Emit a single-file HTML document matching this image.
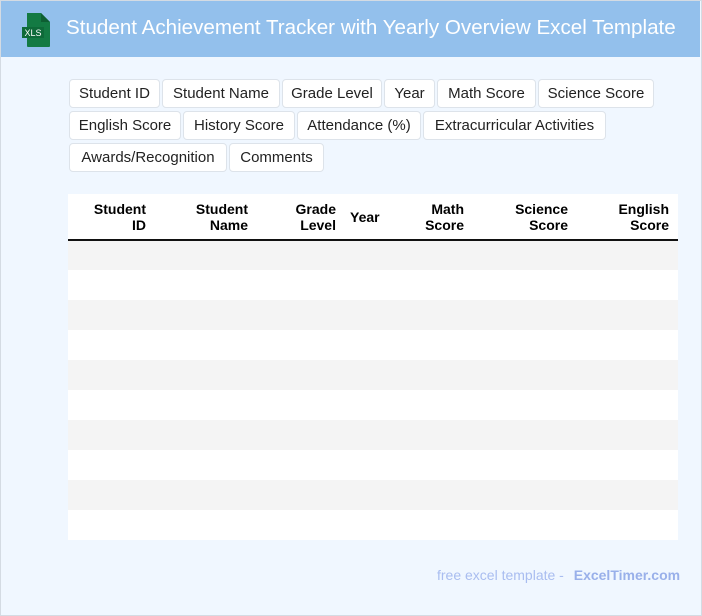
<!DOCTYPE html>
<html><head><meta charset="utf-8"><style>
*{margin:0;padding:0;box-sizing:border-box}
body{width:702px;height:616px;overflow:hidden;font-family:"Liberation Sans",sans-serif;background:#fff}
.page{position:absolute;left:0;top:0;width:702px;height:616px;background:#f0f7ff}
.bd{position:absolute;left:0;top:0;width:702px;height:616px;border:1px solid #d4dbe3;pointer-events:none}
.hdr{position:absolute;left:1px;top:1px;width:699px;height:56px;background:#93c0ec}
.hdr h1{position:absolute;left:65px;top:15px;font-size:20.6px;font-weight:normal;color:#fff;white-space:nowrap}
.tag{position:absolute;height:29px;background:#fff;border:1px solid #dde3ea;border-radius:4px;font-size:15px;color:#222;line-height:27px;text-align:center}
table{position:absolute;left:68px;top:194px;width:610px;border-collapse:collapse;background:#fff}
th{font-size:14px;font-weight:bold;color:#000;text-align:right;padding:0 9px 0 0;height:46px;line-height:16px;vertical-align:middle;border-bottom:2px solid #111}
td{height:30px}
tr.g td{background:#f4f4f4}
.foot{position:absolute;left:437px;top:567px;font-size:14px;color:#a9bdf0;white-space:nowrap}
.foot b{margin-left:6px;color:#99b0ea}
</style></head><body><div class="page">
<div class="hdr">
<svg style="position:absolute;left:20px;top:12px" width="32" height="34" viewBox="0 0 32 34"><path d="M6 0H20L29 9V33Q29 34 28 34H7Q6 34 6 33Z" fill="#137a43"/><path d="M20 0V9H29Z" fill="#0d5e32"/><rect x="1" y="14" width="22" height="11" fill="#0e6a39"/><text x="12" y="23" font-size="9" fill="#fff" text-anchor="middle" font-family="Liberation Sans">XLS</text></svg>
<h1>Student Achievement Tracker with Yearly Overview Excel Template</h1></div>
<div class="tag" style="left:69px;top:79px;width:91px">Student ID</div>
<div class="tag" style="left:162px;top:79px;width:118px">Student Name</div>
<div class="tag" style="left:282px;top:79px;width:100px">Grade Level</div>
<div class="tag" style="left:384px;top:79px;width:51px">Year</div>
<div class="tag" style="left:437px;top:79px;width:99px">Math Score</div>
<div class="tag" style="left:538px;top:79px;width:116px">Science Score</div>
<div class="tag" style="left:69px;top:111px;width:112px">English Score</div>
<div class="tag" style="left:183px;top:111px;width:112px">History Score</div>
<div class="tag" style="left:297px;top:111px;width:124px">Attendance (%)</div>
<div class="tag" style="left:423px;top:111px;width:183px">Extracurricular Activities</div>
<div class="tag" style="left:69px;top:143px;width:158px">Awards/Recognition</div>
<div class="tag" style="left:229px;top:143px;width:95px">Comments</div>
<table>
<tr><th style="width:87px">Student<br>ID</th><th style="width:102px">Student<br>Name</th><th style="width:88px">Grade<br>Level</th><th style="width:45px;text-align:left;padding-left:5px">Year</th><th style="width:83px">Math<br>Score</th><th style="width:104px">Science<br>Score</th><th style="width:101px">English<br>Score</th></tr>
<tr class="g"><td colspan="7"></td></tr><tr><td colspan="7"></td></tr>
<tr class="g"><td colspan="7"></td></tr><tr><td colspan="7"></td></tr>
<tr class="g"><td colspan="7"></td></tr><tr><td colspan="7"></td></tr>
<tr class="g"><td colspan="7"></td></tr><tr><td colspan="7"></td></tr>
<tr class="g"><td colspan="7"></td></tr><tr><td colspan="7"></td></tr>
</table>
<div class="foot">free excel template - <b>ExcelTimer.com</b></div>
</div><div class="bd"></div></body></html>
